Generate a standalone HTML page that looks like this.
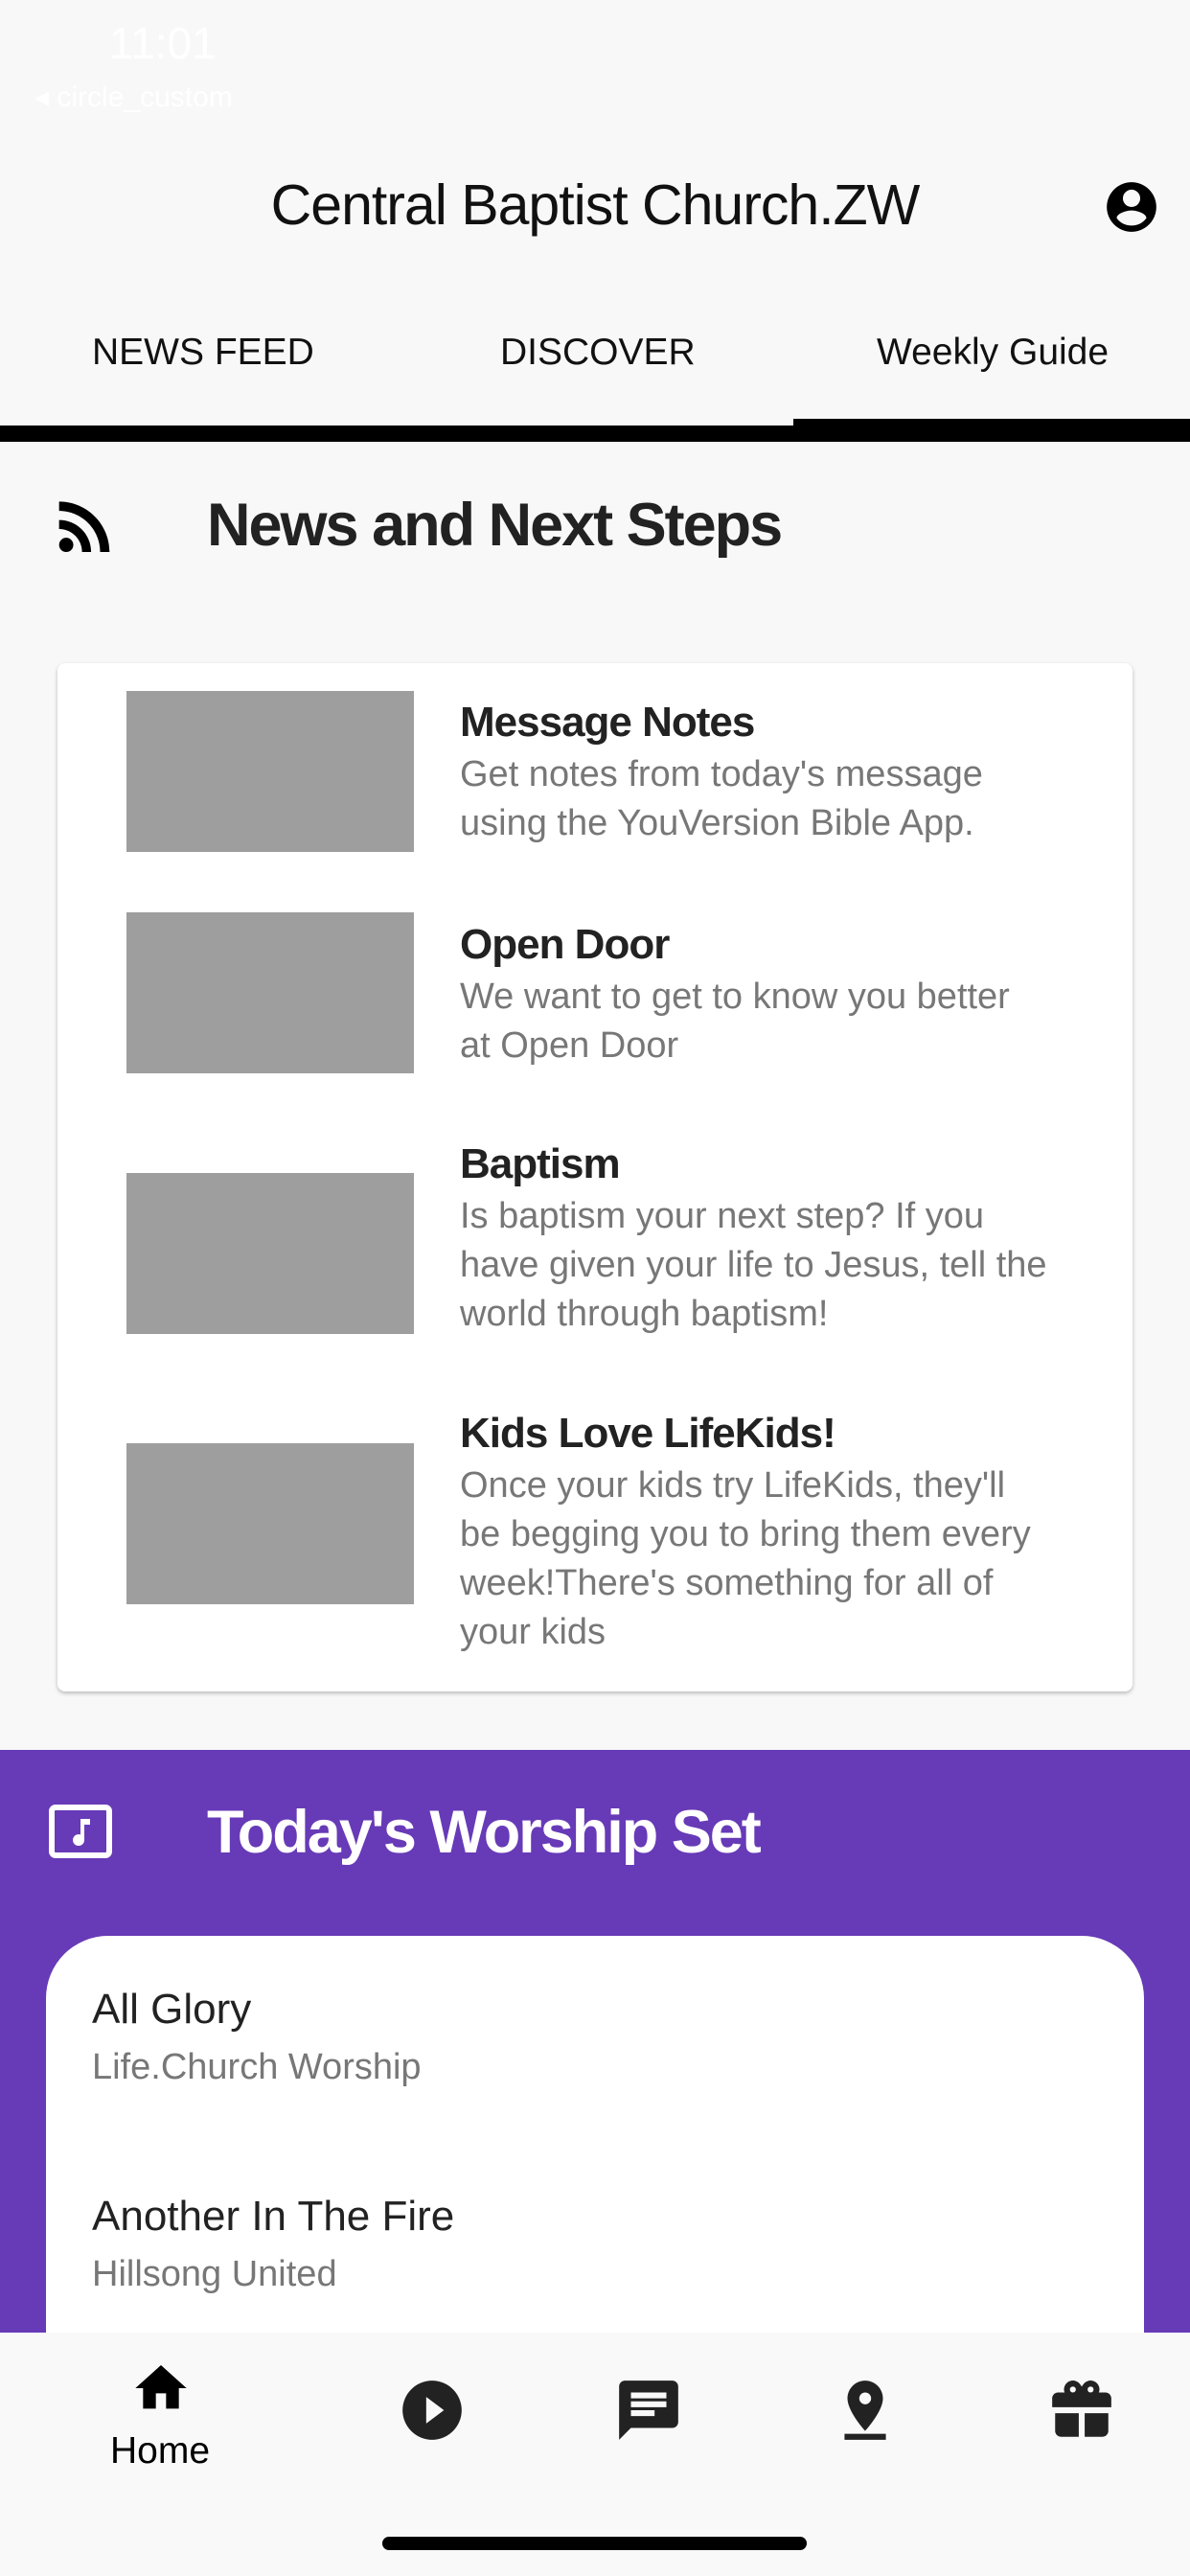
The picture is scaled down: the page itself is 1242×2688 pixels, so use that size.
<!DOCTYPE html>
<html><head><meta charset="utf-8"><style>
*{margin:0;padding:0;box-sizing:border-box}
html,body{width:1242px;height:2688px;overflow:hidden}
body{background:#f8f8f8;font-family:"Liberation Sans",sans-serif;position:relative;color:#111}
.a{position:absolute;white-space:nowrap}
.img{position:absolute;left:132px;width:300px;height:168px;background:#9e9e9e}
.t{position:absolute;left:480px;font-size:44px;font-weight:bold;color:#222;letter-spacing:-1px}
.d{position:absolute;left:480px;font-size:38px;color:#777;line-height:51px;width:610px;white-space:normal}
.song{position:absolute;left:96px;font-size:44px;color:#222}
.art{position:absolute;left:96px;font-size:38px;color:#777}
</style></head><body>
<div class="a" style="left:114px;top:18px;font-size:46px;color:#fff">11:01</div>
<div class="a" style="left:36px;top:84px;font-size:30px;color:#fff">◂ circle_custom</div>
<div class="a" style="left:0;width:1242px;text-align:center;top:180px;font-size:59px;letter-spacing:-1px">Central Baptist Church.ZW</div>
<svg class="a" style="left:1150px;top:184px" width="62" height="64" viewBox="0 0 24 24"><path fill="#000" d="M12 2a10 10 0 1 0 0 20 10 10 0 0 0 0-20zm0 3a3.5 3.5 0 1 1 0 7 3.5 3.5 0 0 1 0-7zm0 14.5a7.5 7.5 0 0 1-6-3c.03-2 4-3.1 6-3.1s5.970 1.1 6 3.1a7.5 7.5 0 0 1-6 3z"/></svg>
<div class="a" style="left:96px;top:346px;font-size:39px">NEWS FEED</div>
<div class="a" style="left:522px;top:346px;font-size:39px">DISCOVER</div>
<div class="a" style="left:915px;top:346px;font-size:39px">Weekly Guide</div>
<div class="a" style="left:0;top:444px;width:1242px;height:17px;background:#000"></div>
<div class="a" style="left:828px;top:437px;width:414px;height:10px;background:#000"></div>
<svg class="a" style="left:60px;top:522px" width="56" height="54" viewBox="4 4 15.6 16"><circle cx="6.2" cy="17.8" r="2.2"/><path d="M4 4.4v2.9c7 0 12.7 5.7 12.7 12.7h2.9C19.6 11.4 12.6 4.4 4 4.4zm0 5.7v2.8c3.9 0 7.1 3.2 7.1 7.1h2.8c0-5.5-4.4-9.900-9.900-9.900z"/></svg>
<div class="a" style="left:216px;top:512px;font-size:63px;font-weight:bold;color:#222;letter-spacing:-2px">News and Next Steps</div>
<div class="a" style="left:60px;top:692px;width:1122px;height:1073px;background:#fff;border-radius:8px;box-shadow:0 2px 4px rgba(0,0,0,.25)"></div>
<div class="img" style="top:721px"></div>
<div class="t" style="top:729px">Message Notes</div>
<div class="d" style="top:783px">Get notes from today's message using the YouVersion Bible App.</div>
<div class="img" style="top:952px"></div>
<div class="t" style="top:961px">Open Door</div>
<div class="d" style="top:1015px">We want to get to know you better at Open Door</div>
<div class="img" style="top:1224px"></div>
<div class="t" style="top:1190px">Baptism</div>
<div class="d" style="top:1244px;width:638px">Is baptism your next step? If you have given your life to Jesus, tell the world through baptism!</div>
<div class="img" style="top:1506px"></div>
<div class="t" style="top:1471px">Kids Love LifeKids!</div>
<div class="d" style="top:1525px">Once your kids try LifeKids, they'll be begging you to bring them every week!There's something for all of your kids</div>
<div class="a" style="left:0;top:1826px;width:1242px;height:862px;background:#673ab7"></div>
<svg class="a" style="left:50px;top:1882px" width="68" height="58" viewBox="0 0 34 29"><rect x="2" y="2" width="30" height="25" rx="2" fill="none" stroke="#fff" stroke-width="3"/><path d="M17 8h5v3h-3v8a3 3 0 1 1-2-2.8z" fill="#fff"/></svg>
<div class="a" style="left:216px;top:1876px;font-size:63px;font-weight:bold;color:#fff;letter-spacing:-2px">Today's Worship Set</div>
<div class="a" style="left:48px;top:2020px;width:1146px;height:500px;background:#fff;border-radius:65px"></div>
<div class="song" style="top:2072px">All Glory</div>
<div class="art" style="top:2136px">Life.Church Worship</div>
<div class="song" style="top:2288px">Another In The Fire</div>
<div class="art" style="top:2352px">Hillsong United</div>
<div class="a" style="left:0;top:2434px;width:1242px;height:254px;background:#f9f9f9"></div>
<svg class="a" style="left:136px;top:2460px" width="64" height="64" viewBox="0 0 24 24"><path d="M10 20v-6h4v6h5v-8h3L12 3 2 12h3v8z"/></svg>
<div class="a" style="left:115px;top:2536px;font-size:39px;color:#000">Home</div>
<svg class="a" style="left:414px;top:2478px" width="74" height="74" viewBox="0 0 24 24"><path fill="#222" d="M12 2a10 10 0 1 0 0 20 10 10 0 0 0 0-20zm-2 14.5v-9l6 4.5z"/></svg>
<svg class="a" style="left:640px;top:2478px" width="74" height="74" viewBox="0 0 24 24"><path fill="#222" d="M20 2H4c-1.1 0-2 .9-2 2v18l4-4h14c1.1 0 2-.9 2-2V4c0-1.1-.9-2-2-2zM6 9h12v2H6zm8 5H6v-2h8zm4-6H6V6h12z"/></svg>
<svg class="a" style="left:866px;top:2478px" width="74" height="74" viewBox="0 0 24 24"><path fill="#222" d="M12 2C8.7 2 6 4.7 6 8c0 4.5 6 11 6 11s6-6.5 6-11c0-3.3-2.7-6-6-6zm0 8a2 2 0 1 1 0-4 2 2 0 0 1 0 4zM5 20h14v2H5z"/></svg>
<svg class="a" style="left:1090px;top:2478px" width="78" height="74" viewBox="0 0 24 24"><path fill="#222" d="M20 6h-2.2c.1-.3.2-.6.2-1a3 3 0 0 0-5.5-1.7L12 4l-.5-.7A3 3 0 0 0 6 5c0 .4.1.7.2 1H4c-1.1 0-2 .9-2 2v3h20V8c0-1.1-.9-2-2-2zM9 4c.6 0 1 .4 1 1s-.4 1-1 1-1-.4-1-1 .4-1 1-1zm6 0c.6 0 1 .4 1 1s-.4 1-1 1-1-.4-1-1 .4-1 1-1zM3 13v6c0 1.1.9 2 2 2h6v-8zm10 0v8h6c1.1 0 2-.9 2-2v-6z"/></svg>
<div class="a" style="left:399px;top:2647px;width:443px;height:14px;border-radius:7px;background:#000"></div>
</body></html>
